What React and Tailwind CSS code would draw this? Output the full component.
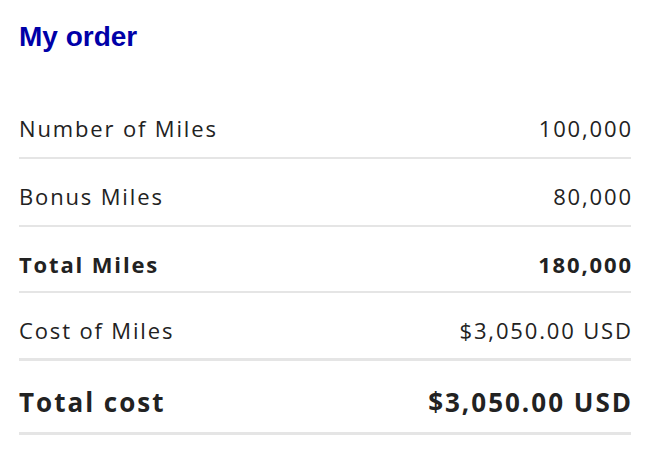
const rows = [
  { label: "Number of Miles", value: "100,000", pb: "pb-[14px]" },
  { label: "Bonus Miles", value: "80,000", pb: "pb-[14px]" },
  { label: "Total Miles", value: "180,000", bold: true, pb: "pb-[12px]" },
];

const App = () => {
  return (
    <div className="bg-white w-[656px] h-[464px] pl-[19px] pr-[25px] pt-[20px]">
      <h1 className="font-['Liberation_Sans',Arial,sans-serif] font-bold text-[28px] leading-[34px] text-[#0000a8]">
        My order
      </h1>

      <div className="mt-[37px] font-['Open_Sans',sans-serif] text-[#222222] tracking-[1.85px]">
        {rows.map((row) => (
          <div
            key={row.label}
            className={`flex justify-between items-center pt-[22px] ${row.pb} border-b-2 border-[#e5e5e5] text-[22px] leading-[30px] ${
              row.bold ? "font-bold" : ""
            }`}
          >
            <span>{row.label}</span>
            <span className="-mr-[1.85px]">{row.value}</span>
          </div>
        ))}
        <div className="flex justify-between items-center pt-[22px] pb-[13px] border-b-[3px] border-[#e5e5e5] text-[22px] leading-[30px]">
          <span>Cost of Miles</span>
          <span className="-mr-[1.85px]">$3,050.00 USD</span>
        </div>
        <div className="flex justify-between items-center pt-[24px] pb-[13px] border-b-[3px] border-[#e5e5e5] text-[26px] leading-[34px] font-bold tracking-[2px]">
          <span>Total cost</span>
          <span className="-mr-[2px]">$3,050.00 USD</span>
        </div>
      </div>
    </div>
  );
};

export default App;
